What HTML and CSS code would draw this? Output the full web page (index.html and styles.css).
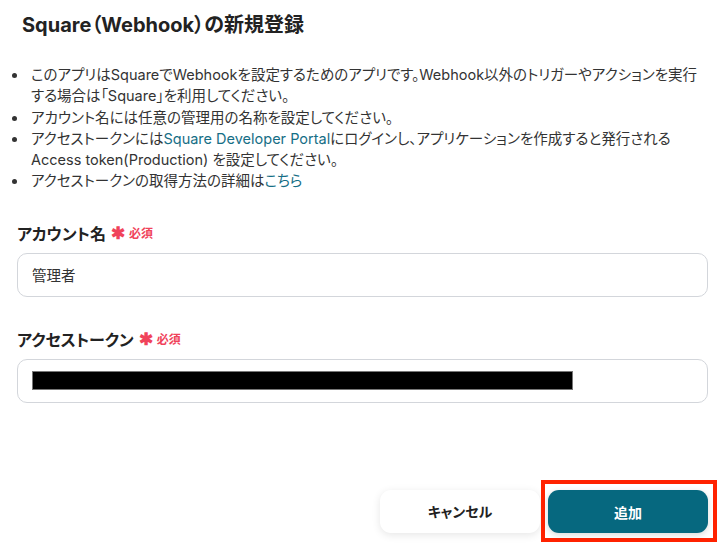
FILE: index.html
```html
<!DOCTYPE html>
<html lang="ja">
<head>
<meta charset="utf-8">
<link rel="stylesheet" href="styles.css">
</head>
<body>
<div class="page">
  <h1 class="title">Square（Webhook）の新規登録</h1>
  <ul class="notes">
    <li>このアプリはSquareでWebhookを設定するためのアプリです。Webhook以外のトリガーやアクションを実行<br>する場合は「Square」を利用してください。</li>
    <li>アカウント名には任意の管理用の名称を設定してください。</li>
    <li>アクセストークンには<a class="link">Square Developer Portal</a>にログインし、アプリケーションを作成すると発行される<br>Access token(Production) を設定してください。</li>
    <li>アクセストークンの取得方法の詳細は<a class="link">こちら</a></li>
  </ul>
  <div class="field">
    <div class="label">アカウント名<span class="req"><span class="star">✱</span>必須</span></div>
    <div class="input">管理者</div>
  </div>
  <div class="field field2">
    <div class="label">アクセストークン<span class="req"><span class="star">✱</span>必須</span></div>
    <div class="input"><span class="redact"></span></div>
  </div>
  <div class="actions">
    <button class="btn cancel">キャンセル</button>
    <div class="highlight"><button class="btn primary">追加</button></div>
  </div>
</div>
</body>
</html>
```

FILE: styles.css
```css
* { box-sizing: border-box; }
body {
  margin: 0;
  background: #fff;
  font-family: Inter, "Noto Sans CJK JP", sans-serif;
  font-feature-settings: "palt";
  color: #2b2b2b;
}
.page {
  width: 728px;
  height: 552px;
  padding: 12px 20px 0 17px;
  display: flex;
  flex-direction: column;
}
.title {
  margin: 0 0 0 5px;
  font-size: 20px;
  font-weight: 700;
  line-height: 26px;
  color: #222;
}
.notes {
  list-style: none;
  margin: 26px 0 0 -5px;
  padding: 0;
  font-size: 14.5px;
  line-height: 21.3px;
  color: #333;
}
.notes li {
  position: relative;
  padding-left: 19px;
}
.notes li::before {
  content: "";
  position: absolute;
  left: 0;
  top: 9px;
  width: 5px;
  height: 5px;
  border-radius: 50%;
  background: #333;
}
.link { color: #166e86; text-decoration: none; }
.field { margin-top: 31px; }
.field2 { margin-top: 32px; }
.label {
  font-size: 16px;
  font-weight: 700;
  line-height: 22px;
  color: #222;
  display: flex;
  align-items: center;
}
.req {
  display: inline-flex;
  align-items: center;
  margin-left: 5px;
  color: #f0435a;
  font-size: 12px;
  font-weight: 700;
}
.star { font-size: 17px; margin-right: 4px; line-height: 1; }
.input {
  margin-top: 8px;
  height: 44px;
  border: 1px solid #d3d6db;
  border-radius: 10px;
  padding: 0 14px;
  display: flex;
  align-items: center;
  font-size: 14.5px;
  color: #333;
}
.redact {
  display: block;
  width: 541px;
  height: 19px;
  background: #000;
  border: 1px solid #777;
}
.actions {
  margin-top: auto;
  margin-bottom: 10px;
  display: flex;
  justify-content: flex-end;
  align-items: center;
  gap: 1px;
  margin-right: -9px;
}
.btn {
  width: 160px;
  height: 43px;
  border: none;
  border-radius: 11px;
  font-family: Inter, "Noto Sans CJK JP", sans-serif;
  font-feature-settings: "palt";
  font-size: 14px;
  font-weight: 700;
  cursor: pointer;
}
.cancel {
  background: #fff;
  color: #222;
  box-shadow: 0 2px 8px rgba(0,0,0,0.10);
}
.highlight {
  border: 4px solid #ff2200;
  padding: 6px 5px 5px 3px;
}
.primary {
  display: block;
  background: #06687f;
  color: #fff;
  box-shadow: 0 2px 6px rgba(0,0,0,0.15);
}
```
